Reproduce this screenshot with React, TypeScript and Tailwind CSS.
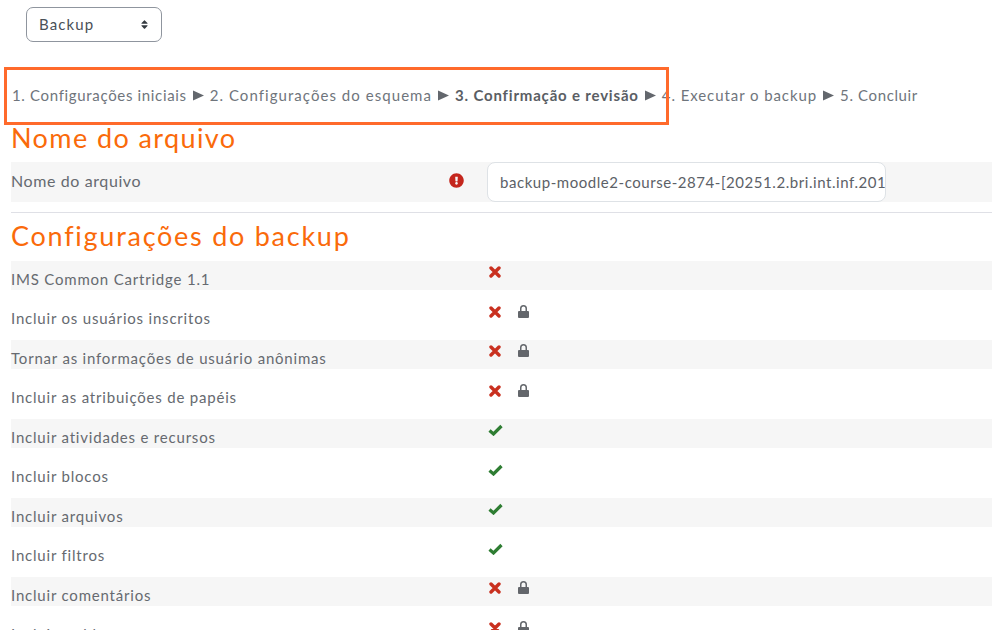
import React from "react";
import { FaExclamationCircle, FaSort } from "react-icons/fa";

const rows: [string, boolean, boolean][] = [
  ["IMS Common Cartridge 1.1", false, false],
  ["Incluir os usuários inscritos", false, true],
  ["Tornar as informações de usuário anônimas", false, true],
  ["Incluir as atribuições de papéis", false, true],
  ["Incluir atividades e recursos", true, false],
  ["Incluir blocos", true, false],
  ["Incluir arquivos", true, false],
  ["Incluir filtros", true, false],
  ["Incluir comentários", false, true],
  ["Incluir emblemas", false, true],
];

function Arrow() {
  return (
    <span className="mx-[6px] inline-flex w-[11px] items-center">
      <svg width="11" height="11" viewBox="0 0 11 11">
        <path d="M0 0.5 L11 5.5 L0 10.5 Z" fill="#63676d" />
      </svg>
    </span>
  );
}

function Lock() {
  return (
    <svg width="11" height="14" viewBox="0 0 11 14" className="ml-[17px] -mt-[2px]">
      <path
        d="M2 7V4.5a3.5 3.5 0 0 1 7 0V7h1a1 1 0 0 1 1 1v5a1 1 0 0 1-1 1H1a1 1 0 0 1-1-1V8a1 1 0 0 1 1-1h1zm1.5 0h4V4.5a2 2 0 0 0-4 0V7z"
        fill="#63666b"
      />
    </svg>
  );
}

function Cross() {
  return (
    <svg width="12" height="12" viewBox="0 0 12 12" className="block">
      <path d="M2 2 L10 10 M10 2 L2 10" stroke="#c9301f" strokeWidth="3.4" strokeLinecap="round" fill="none" />
    </svg>
  );
}

function Check() {
  return (
    <svg width="15" height="12" viewBox="0 0 15 12" className="-ml-[1px] block shrink-0">
      <path d="M1.5 6.5 L5.5 10 L13.5 2" stroke="#2e7d32" strokeWidth="3.2" fill="none" />
    </svg>
  );
}

export default function App() {
  return (
    <div className="relative h-[630px] w-[992px] overflow-hidden bg-white font-['Lato','Open_Sans',sans-serif] text-[#5a5f66]">
      <div className="pl-[26px] pt-[7px]">
        <div className="flex h-[35px] w-[136px] items-center justify-between rounded-[7px] border border-[#8f959e] pl-[12px] pr-[11px] text-[15px] tracking-[1.1px] text-[#495057]">
          <span>Backup</span>
          <FaSort className="text-[11px] text-[#343a40]" />
        </div>
      </div>
      <div className="pl-[11px]">
        <div className="mt-[44px] flex h-[19px] items-center whitespace-nowrap pl-[1px] text-[15px] leading-[19px] text-[#6f757c]">
          <span className="tracking-[0.66px]">1. Configurações iniciais</span>
          <Arrow />
          <span className="tracking-[1.05px]">2. Configurações do esquema</span>
          <Arrow />
          <span className="font-bold tracking-[0.82px] text-[#5a5e64]">3. Confirmação e revisão</span>
          <Arrow />
          <span className="tracking-[0.92px]">4. Executar o backup</span>
          <Arrow />
          <span className="tracking-[0.62px]">5. Concluir</span>
        </div>
        <h2 className="mt-[18px] text-[27px] leading-[30px] tracking-[1.4px] text-[#fa6a0a]">Nome do arquivo</h2>
        <div className="mt-[9px] flex h-[40px] items-start bg-[#f6f6f6]">
          <div className="relative flex h-[40px] w-[476px] items-center pb-[2px] text-[16px] tracking-[0.6px] text-[#666a70]">
            Nome do arquivo
            <FaExclamationCircle className="absolute left-[438px] top-[11px] text-[15px] text-[#c4261d]" />
          </div>
          <div className="flex h-[40px] w-[399px] items-center overflow-hidden rounded-[8px] border border-[#dee2e6] bg-white pl-[12px] whitespace-nowrap text-[15px] tracking-[0.55px] text-[#5c6167]">
            backup-moodle2-course-2874-[20251.2.bri.int.inf.201
          </div>
        </div>
        <div className="mt-[10px] h-px bg-[#dfe0e6]" />
        <h2 className="mt-[8px] text-[27px] leading-[30px] tracking-[1.74px] text-[#fa6a0a]">Configurações do backup</h2>
        <div className="mt-[10px]">
          {rows.map(([label, ok, locked], i) => (
            <div key={label} className={`mb-[10.5px] flex h-[29px] items-start ${i % 2 === 0 ? "bg-[#f6f6f6]" : ""}`}>
              <div className="w-[478px] pt-[8.9px] text-[15px] leading-[19px] tracking-[0.8px] text-[#666a70]">{label}</div>
              <div className="flex items-center pt-[5px]">
                <span className="flex w-[12px]">{ok ? <Check /> : <Cross />}</span>
                {locked && <Lock />}
              </div>
            </div>
          ))}
        </div>
      </div>
      <div className="absolute left-[4px] top-[67px] h-[58px] w-[665px] border-[3px] border-[#ff6a2b]" />
    </div>
  );
}
